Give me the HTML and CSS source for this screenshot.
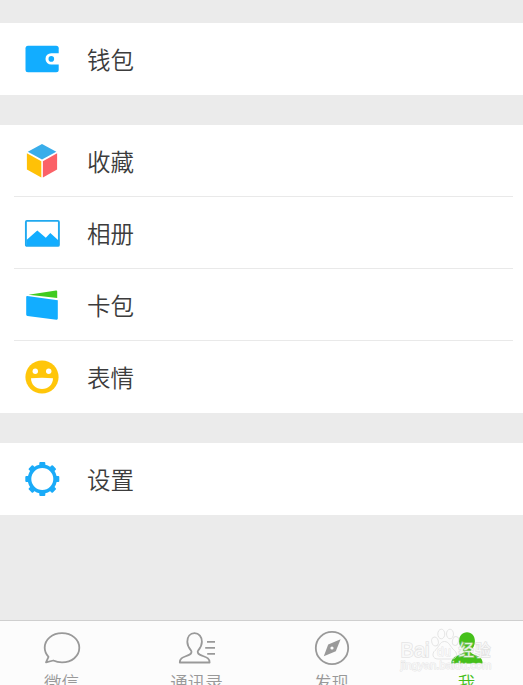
FILE: index.html
```html
<!DOCTYPE html>
<html lang="zh-CN">
<head>
  <meta charset="UTF-8">
  <meta name="viewport" content="width=device-width, initial-scale=1.0">
  <title>我</title>
  <link rel="stylesheet" href="styles.css">
</head>
<body>
  <main class="menu">
    <section class="group">
      <div class="item">
        <svg class="icon" viewBox="0 0 36 36">
          <rect x="1.5" y="4.8" width="33.2" height="26.5" rx="2.5" fill="#12adff"/>
          <path d="M36 12.2H27.2a5.7 5.7 0 0 0 0 11.4H36z" fill="#fff"/>
          <circle cx="27.3" cy="17.9" r="2.8" fill="#12adff"/>
        </svg>
        <span>钱包</span>
      </div>
    </section>

    <section class="group">
      <div class="item">
        <svg class="icon" viewBox="0 0 36 36">
          <path d="M18 1L32.3 8.7 18 16.4 3.8 8.7z" fill="#39adea"/>
          <path d="M2.9 10.3l14.4 8V34.4L2.9 26.6z" fill="#ffc107"/>
          <path d="M33.1 10.3l-14.2 8V34.4l14.2-7.8z" fill="#fb6167"/>
        </svg>
        <span>收藏</span>
      </div>
      <div class="item">
        <svg class="icon" viewBox="0 0 36 36">
          <rect x="1.9" y="5.9" width="33" height="25" rx="1" fill="#fff" stroke="#20a9ef" stroke-width="1.9"/>
          <path d="M2.5 25L13.3 15.4l8.5 7.4L26.3 18l8 7.3V30.5H2.5z" fill="#12adff"/>
        </svg>
        <span>相册</span>
      </div>
      <div class="item">
        <svg class="icon" viewBox="0 0 36 36">
          <path d="M4.5 7.7L32 3.5q1.2-.2 1.2 1V11z" fill="#40cb20"/>
          <path d="M3.2 8.9L33.8 13.2V31.6q0 1.3-1.3 1.1L3.4 28.9q-1.2-.2-1.2-1.3V10q0-1.2 1-1.1z" fill="#12adff"/>
        </svg>
        <span>卡包</span>
      </div>
      <div class="item">
        <svg class="icon" viewBox="0 0 36 36">
          <circle cx="18" cy="18" r="16.6" fill="#ffc60a"/>
          <circle cx="11.3" cy="12.3" r="2.7" fill="#fff"/>
          <circle cx="24.7" cy="12.3" r="2.7" fill="#fff"/>
          <path d="M7 19.3q11-1.2 22 0c0 6.3-4.8 10.7-11 10.7S7 25.6 7 19.3z" fill="#fff"/>
        </svg>
        <span>表情</span>
      </div>
    </section>

    <section class="group">
      <div class="item">
        <svg class="icon" viewBox="0 0 36 36">
          <g transform="translate(18.3 18)" fill="#1aabf8">
            <circle r="12.8" fill="none" stroke="#1aabf8" stroke-width="3.6"/>
            <g id="teeth">
              <rect x="-3" y="-17" width="6" height="4.5" rx="1"/>
              <rect x="-3" y="12.5" width="6" height="4.5" rx="1"/>
              <rect x="-17" y="-3" width="4.5" height="6" rx="1"/>
              <rect x="12.5" y="-3" width="4.5" height="6" rx="1"/>
            </g>
            <use href="#teeth" transform="rotate(45)"/>
          </g>
        </svg>
        <span>设置</span>
      </div>
    </section>
  </main>

  <nav class="tabs">
    <div class="tab">
      <svg class="tab-icon" viewBox="0 0 40 40">
        <path d="M20 4.2c9.8 0 17.3 6.3 17.3 14.6S29.8 33.4 20 33.4c-3.2 0-6.1-.7-8.7-1.9L4 33.3l2.5-5.5C4.2 25.4 2.7 22.3 2.7 18.8 2.7 10.5 10.2 4.2 20 4.2z"/>
      </svg>
      <span>微信</span>
    </div>
    <div class="tab">
      <svg class="tab-icon" viewBox="0 0 40 40">
        <path d="M17.5 4.2c-4.4 0-7.2 3.5-7.2 8.6 0 4 1.8 6.4 3.6 8.5 1.2 1.5.5 3.3-1.4 4.3C7.2 28.300 2.800 28.300 2.800 33.500H32.600c0-5.200-4.500-5.200-9.900-7.900-1.900-1-2.600-2.800-1.400-4.300 1.800-2.100 3.600-4.500 3.600-8.500 0-5.100-2.900-8.600-7.400-8.600z"/>
        <path d="M30 12.8h8M28.2 18.8H38M30.2 24.8H38"/>
      </svg>
      <span>通讯录</span>
    </div>
    <div class="tab">
      <svg class="tab-icon" viewBox="0 0 40 40">
        <circle cx="20" cy="19" r="16.2"/>
        <path d="M28.6 10.2L23.8 22.3 11.8 27.2 16.2 15.5z" class="needle"/>
        <circle cx="20" cy="19" r="1.6" class="pivot"/>
      </svg>
      <span>发现</span>
    </div>
    <div class="tab active">
      <svg class="tab-icon" viewBox="0 0 40 40">
        <path d="M20 3.3c-4.8 0-7.9 3.7-7.9 8.9 0 4.2 1.9 6.7 3.7 8.8 1.1 1.4.6 2.8-1.2 3.7C9.4 27.4 4.3 27.7 4.3 34.5H35.700c0-6.800-5.100-7.100-10.300-9.800-1.800-.9-2.300-2.300-1.200-3.700 1.800-2.100 3.700-4.600 3.700-8.800 0-5.200-3.100-8.900-7.900-8.900z"/>
      </svg>
      <span>我</span>
    </div>
  </nav>

  <div class="watermark">
    <svg viewBox="0 0 100 50">
      <g class="paw">
        <ellipse cx="37" cy="15.5" rx="3.3" ry="4.5" transform="rotate(-15 37 15.5)"/>
        <ellipse cx="43.3" cy="8" rx="3.5" ry="4.8"/>
        <ellipse cx="52" cy="8" rx="3.5" ry="4.8"/>
        <ellipse cx="57.500" cy="15" rx="3" ry="4.5" transform="rotate(15 57.5 15)"/>
        <path d="M46.5 15.5c-5 0-5.500 6-9.500 9-3.500 3-2.500 8.500 3 8.500 4 0 9 0 13.500 0 5.500 0 6.500-5.500 3-8.500-4-3-5-9-10-9z"/>
      </g>
      <g class="mark">
        <text x="2.5" y="31" font-size="20" textLength="29">Bai</text>
        <text x="39" y="30" font-size="12" textLength="14" class="mark-small">du</text>
        <text x="60.5" y="30" font-size="15.5" textLength="32" class="mark-cn">经验</text>
        <text x="2.5" y="43" font-size="10.5" textLength="91" lengthAdjust="spacingAndGlyphs" class="mark-small">jingyan.baidu.com</text>
      </g>
    </svg>
  </div>
</body>
</html>
```
FILE: styles.css
```css
* {
  box-sizing: border-box;
}
body {
  margin: 0;
  height: 100vh;
  overflow: hidden;
  display: flex;
  flex-direction: column;
  background-color: #ebebeb;
  color: #3c3c3c;
  font-family: "Noto Sans CJK SC", sans-serif;
}
.menu {
  flex: 1;
  display: flex;
  flex-direction: column;
  gap: 30px;
  padding-top: 23px;
}
.group {
  background-color: #fff;
  padding: 0 10px 0 14px;
}
.item {
  display: flex;
  align-items: center;
  gap: 27px;
  height: 72px;
  padding-left: 10px;
  font-size: 23.5px;
  font-weight: 350;
  line-height: 34px;
}
.item:not(:last-child) {
  border-bottom: 1px solid #e9e9e9;
}
.icon {
  width: 36px;
  height: 36px;
}
.tabs {
  flex: none;
  display: flex;
  justify-content: space-between;
  height: 65px;
  padding: 8px 21px 0 26px;
  background-color: #fcfcfc;
  border-top: 1px solid #cfcfcf;
}
.tab {
  width: 71px;
  display: flex;
  flex-direction: column;
  align-items: center;
  color: #999;
  font-size: 17.5px;
  font-weight: 350;
  line-height: 25px;
}
.tab-icon {
  flex: none;
  width: 40px;
  height: 40px;
  fill: none;
  stroke: #999;
  stroke-width: 1.8;
  stroke-linejoin: round;
}
.needle {
  fill: #999;
  stroke: none;
}
.pivot {
  fill: #fcfcfc;
  stroke: none;
}
.active {
  color: #45c01a;
}
.active .tab-icon {
  fill: #45c01a;
  stroke: none;
}
/* watermark lies over the tab bar */
.watermark {
  position: absolute;
  right: 25px;
  bottom: 9px;
  width: 100px;
  height: 50px;
}
.watermark svg {
  display: block;
}
.paw {
  fill: rgba(255, 255, 255, 0.1);
  stroke: rgba(222, 222, 222, 0.8);
  stroke-width: 1;
}
.mark {
  font-family: "Liberation Sans", sans-serif;
  fill: rgba(255, 255, 255, 0.8);
  stroke: rgba(205, 205, 205, 0.5);
  stroke-width: 1.6;
  paint-order: stroke;
}
.mark-cn {
  font-family: "Noto Sans CJK SC", sans-serif;
}
.mark-small {
  stroke-width: 0.9;
}
```
